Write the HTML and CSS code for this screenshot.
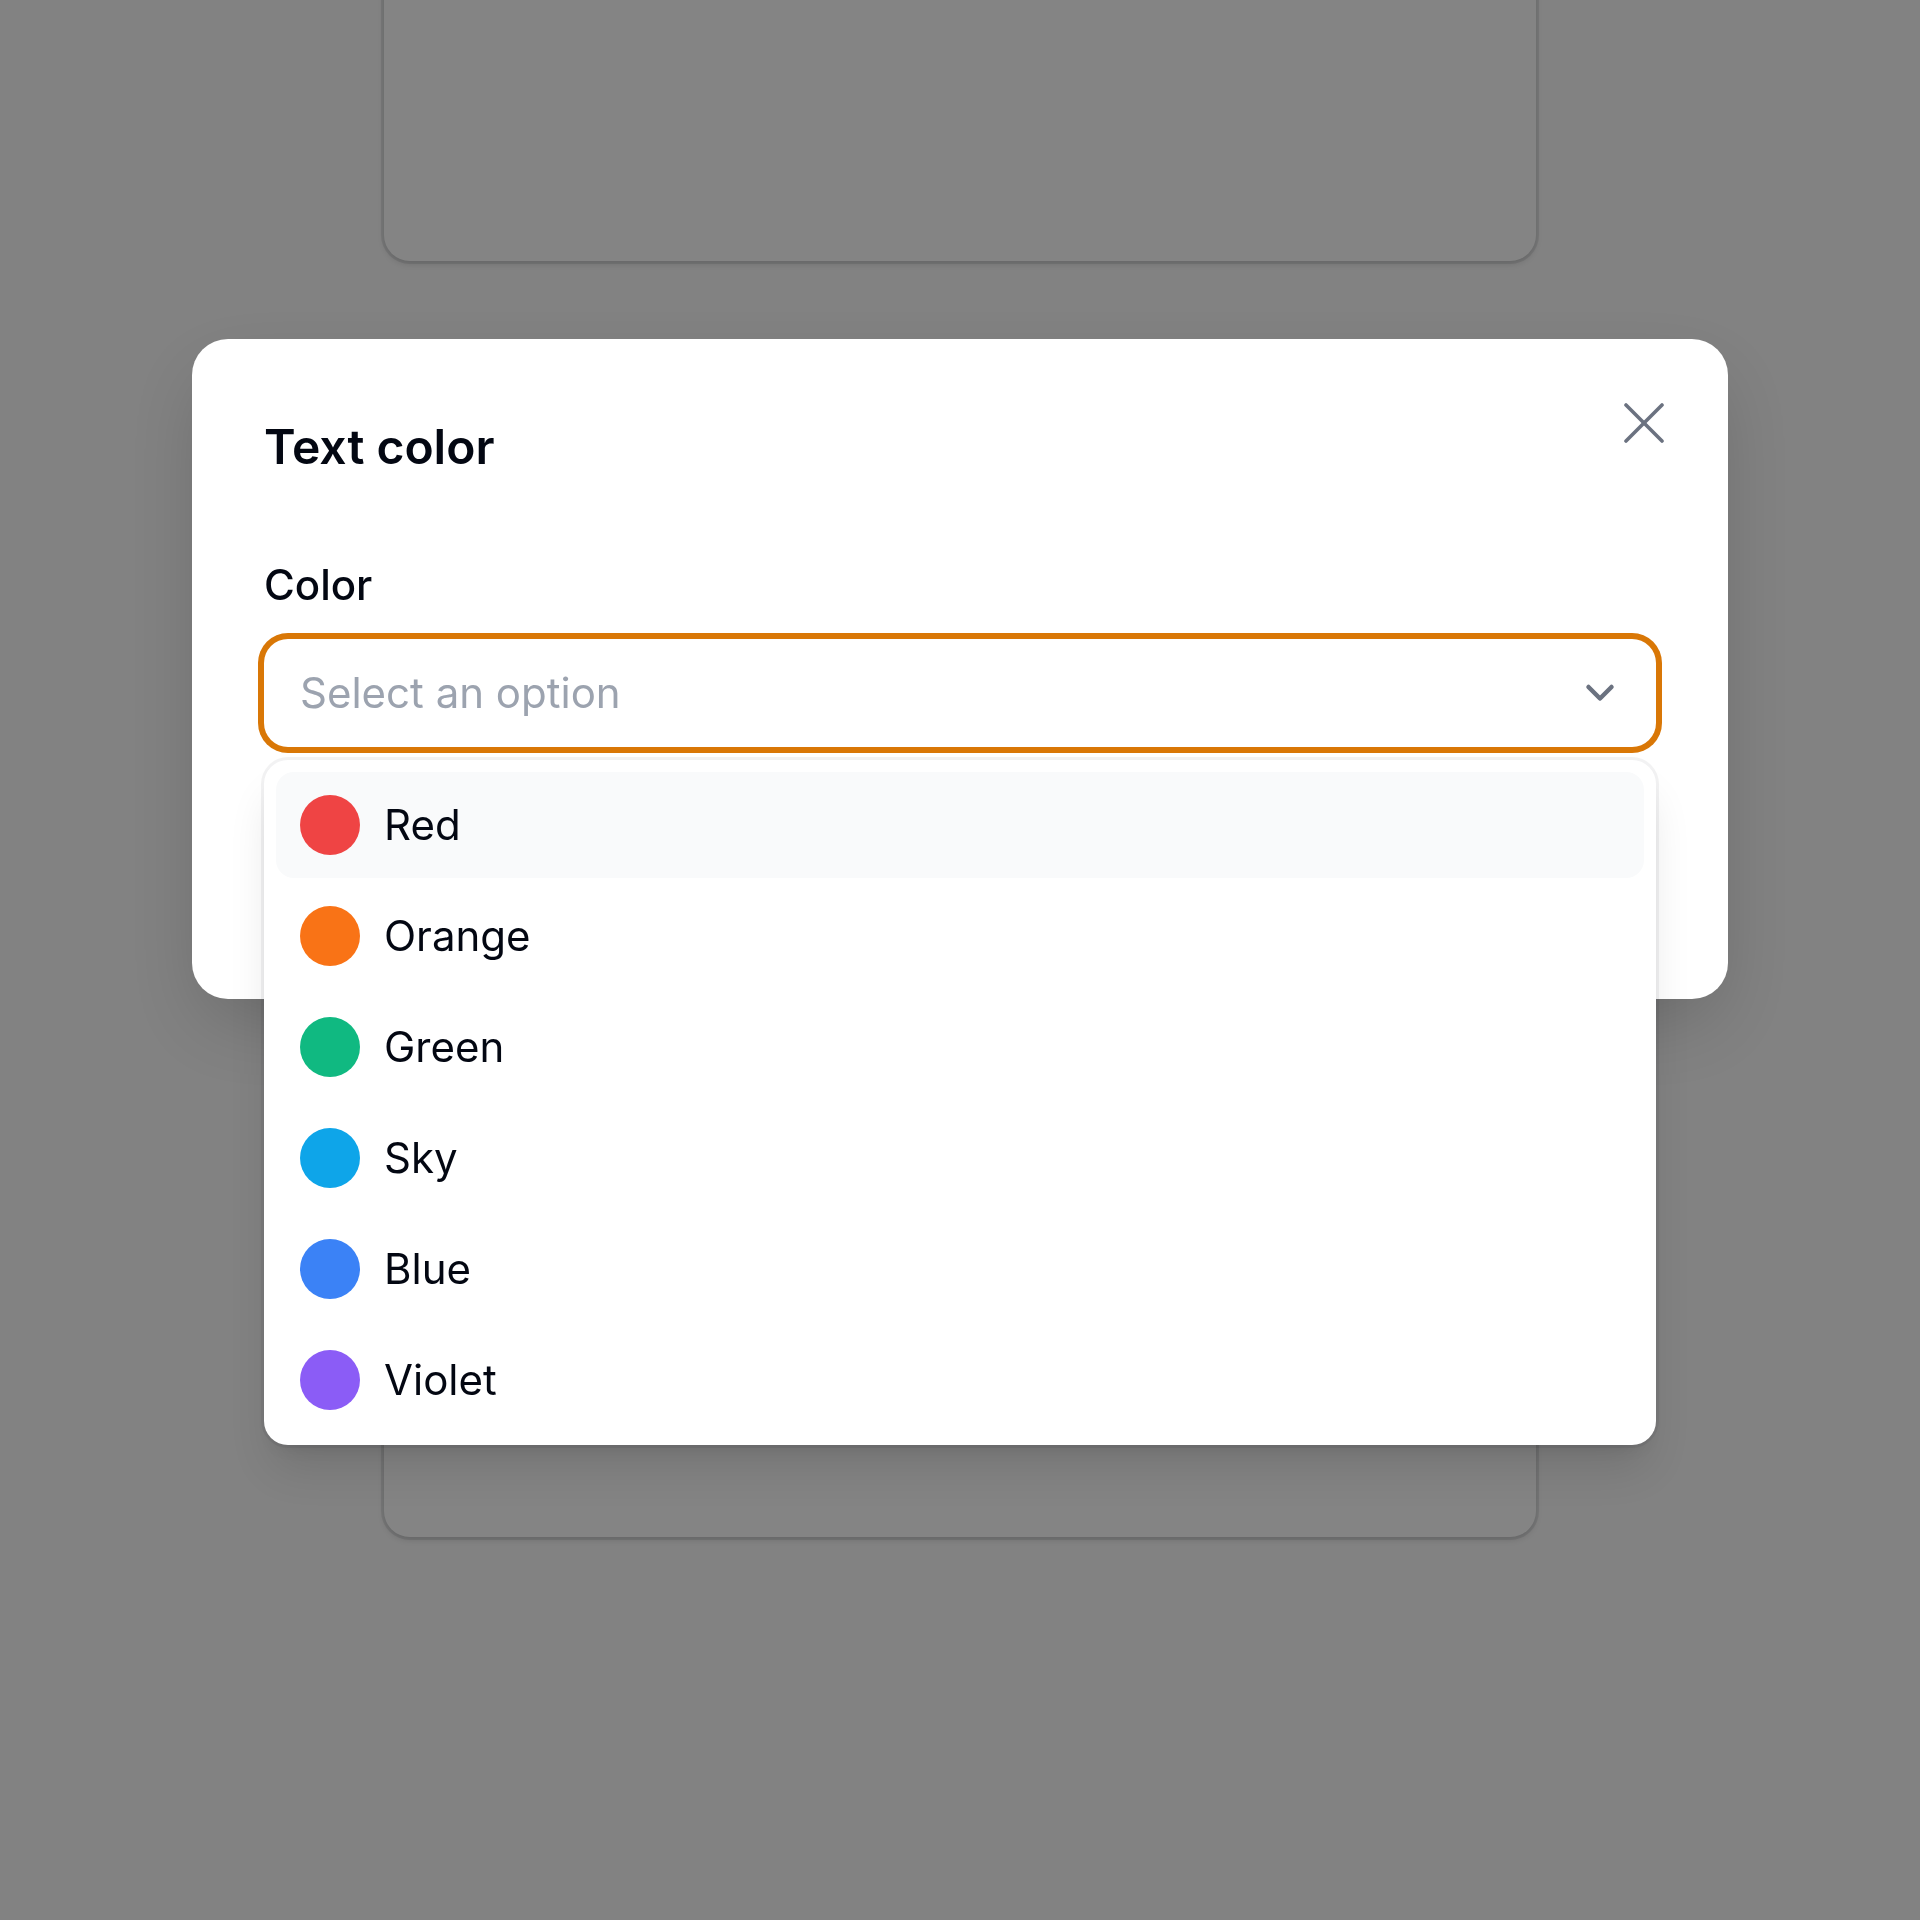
FILE: index.html
```html
<!DOCTYPE html>
<html lang="en">
<head>
<meta charset="utf-8">
<title>Text color</title>
<link rel="stylesheet" href="styles.css">
</head>
<body>
  <main class="page">
    <section class="card card-top"></section>
    <section class="card card-main"></section>
  </main>

  <div class="overlay">
    <div class="modal" role="dialog" aria-labelledby="modal-title">
      <button class="close-btn" type="button" aria-label="Close">
        <svg class="close-icon" viewBox="0 0 40 40" width="40" height="40" aria-hidden="true">
          <line x1="2" y1="2" x2="38" y2="38"></line>
          <line x1="38" y1="2" x2="2" y2="38"></line>
        </svg>
      </button>

      <h2 class="modal-title" id="modal-title">Text color</h2>

      <div class="field">
        <label class="field-label">Color</label>
        <div class="select-wrap">
          <div class="select">
            <span class="placeholder">Select an option</span>
            <svg class="chevron" viewBox="0 0 30 20" width="30" height="20" aria-hidden="true">
              <polyline points="3.5,4 15,15.5 26.5,4"></polyline>
            </svg>
          </div>

          <ul class="options" role="listbox">
            <li class="option is-active"><span class="dot dot-red"></span><span class="option-label">Red</span></li>
            <li class="option"><span class="dot dot-orange"></span><span class="option-label">Orange</span></li>
            <li class="option"><span class="dot dot-green"></span><span class="option-label">Green</span></li>
            <li class="option"><span class="dot dot-sky"></span><span class="option-label">Sky</span></li>
            <li class="option"><span class="dot dot-blue"></span><span class="option-label">Blue</span></li>
            <li class="option"><span class="dot dot-violet"></span><span class="option-label">Violet</span></li>
          </ul>
        </div>
      </div>

      <div class="modal-footer"></div>
    </div>
  </div>
</body>
</html>
```

FILE: styles.css
```css
* {
  box-sizing: border-box;
}

html,
body {
  margin: 0;
  padding: 0;
}

body {
  width: 1920px;
  height: 1920px;
  overflow: hidden;
  background: #fafafa;
  font-family: "Inter", "Noto Sans", "Liberation Sans", sans-serif;
  color: #030712;
}

/* background page */
.page {
  width: 1152px;
  margin: -339px auto 0;
  display: flex;
  flex-direction: column;
  gap: 96px;
}

.card {
  background: #ffffff;
  border-radius: 26px;
  box-shadow: 0 0 0 3px rgba(3, 7, 18, 0.09), 0 3px 6px rgba(0, 0, 0, 0.14);
}

.card-top {
  height: 600px;
}

.card-main {
  height: 1180px;
}

/* overlay */
.overlay {
  position: fixed;
  inset: 0;
  background: rgba(10, 10, 10, 0.5);
  display: flex;
  justify-content: center;
  align-items: flex-start;
  padding-top: 339px;
}

.modal {
  position: relative;
  width: 1536px;
  background: #ffffff;
  border-radius: 36px;
  padding: 72px;
  box-shadow: 0 30px 75px -15px rgba(0, 0, 0, 0.2);
}

.close-btn {
  position: absolute;
  top: 48px;
  right: 48px;
  width: 72px;
  height: 72px;
  padding: 0;
  border: 0;
  background: transparent;
  display: flex;
  align-items: center;
  justify-content: center;
}

.close-icon line {
  stroke: #6b7280;
  stroke-width: 3.6;
  stroke-linecap: round;
}

.modal-title {
  margin: 0;
  font-size: 48px;
  line-height: 72px;
  font-weight: 600;
  color: #030712;
}

.field {
  margin-top: 72px;
  display: flex;
  flex-direction: column;
  gap: 24px;
}

.field-label {
  font-size: 42px;
  line-height: 60px;
  font-weight: 500;
  color: #030712;
}

.select-wrap {
  position: relative;
}

.select {
  height: 108px;
  border-radius: 24px;
  background: #ffffff;
  box-shadow: 0 0 0 6px #d97706;
  display: flex;
  align-items: center;
  justify-content: space-between;
  padding: 0 41px 0 36px;
}

.placeholder {
  font-size: 42px;
  line-height: 60px;
  color: #9ca3af;
}

.chevron polyline {
  fill: none;
  stroke: #6b7280;
  stroke-width: 4.5;
  stroke-linecap: round;
  stroke-linejoin: round;
}

.options {
  position: absolute;
  top: 121px;
  left: 0;
  right: 0;
  z-index: 10;
  margin: 0;
  padding: 12px;
  list-style: none;
  background: #ffffff;
  border-radius: 24px;
  display: flex;
  flex-direction: column;
  gap: 5px;
  box-shadow: 0 0 0 3px rgba(3, 7, 18, 0.05), 0 30px 45px -9px rgba(0, 0, 0, 0.12), 0 12px 18px -12px rgba(0, 0, 0, 0.12);
}

.option {
  height: 106px;
  display: flex;
  align-items: center;
  gap: 24px;
  padding-left: 24px;
  border-radius: 18px;
}

.option.is-active {
  background: #f9fafb;
}

.dot {
  width: 60px;
  height: 60px;
  border-radius: 50%;
  flex: none;
}

.dot-red { background: #ef4444; }
.dot-orange { background: #f97316; }
.dot-green { background: #10b981; }
.dot-sky { background: #0ea5e9; }
.dot-blue { background: #3b82f6; }
.dot-violet { background: #8b5cf6; }

.option-label {
  font-size: 42px;
  line-height: 60px;
  color: #030712;
}

.modal-footer {
  margin-top: 72px;
  height: 108px;
}
```
